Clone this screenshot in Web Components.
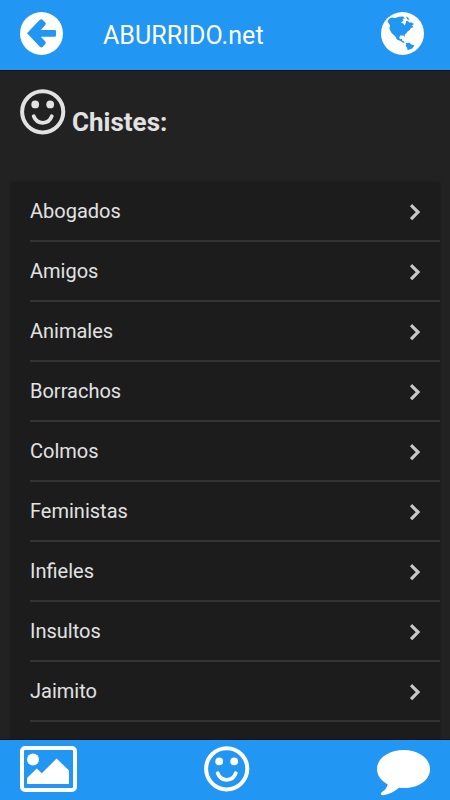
<!DOCTYPE html>
<html lang="es">
<head>
<meta charset="utf-8">
<title>ABURRIDO.net</title>
<style>
html,body{margin:0;height:100%;overflow:hidden;background:#222}
body{font-family:Roboto,"Noto Sans",sans-serif;color:#e2e2e2}
</style>
</head>
<body>
<joke-app></joke-app>
<script>
const icons = {
  back: [43,43,`<circle cx="21.5" cy="21.5" r="21.5" fill="#fff"/><path d="M7 21.3 19.6 8.1Q21.2 6.4 22.8 8L25.2 10.3Q26.6 11.7 25.1 13.3L20.8 18H34.6Q36 18 36 19.3V23.2Q36 24.7 34.6 24.7H20.8L25.1 29.3Q26.6 30.8 25.1 32.3L22.8 34.8Q21.2 36.3 19.6 34.6Z" fill="#2196f3"/>`],
  globe: [43,43,`<circle cx="21.5" cy="21.5" r="21.5" fill="#fff"/><path d="M6.5 9.5 8 6.8 10.5 5.6 14 6 18 4.8 22 4.4 24 6.2 21.5 7 22.5 8.8 19.8 10.4 21.8 11.2 23.8 13.4 24.8 10.8 25.2 8.8 27.2 9.2 28.4 10.6 30.5 10.4 33 12 31 13.6 32.4 15.2 29.8 16 28.8 18 26.8 19.2 25.4 21.2 23.8 22.6 23.8 25.2 22.5 23.4 19.5 23.4 18.2 25.2 19 27.2 21.2 26.8 20.9 28.4 22.8 29.2 23.5 31 21.6 30.4 20 29.2 15.9 27.4 14.6 24.8 10.4 20.8 8.4 16.8 9 13.3Z" fill="#2196f3"/><path d="M25 4.4 27 5.4 28.5 8 26.4 7.5Z" fill="#2196f3"/><path d="M25 31 28.5 30.8 30.5 32.4 33.4 33.6 31.2 36.4 26.5 38.2 26.2 36 24.8 34Z" fill="#2196f3"/>`],
  smile: [46,46,`<g fill="none" stroke="currentColor" stroke-width="4"><circle cx="22.7" cy="22.8" r="20.6"/><path d="M13.7 27.2C17.2 36 28.6 36 31.8 27.2" stroke-width="3.8" stroke-linecap="round"/></g><g fill="currentColor"><circle cx="15.2" cy="15.4" r="3.9"/><circle cx="30.2" cy="15.4" r="3.9"/></g>`],
  image: [57,46,`<rect x="2" y="2" width="53" height="42" rx="3" fill="none" stroke="#fff" stroke-width="4"/><circle cx="13" cy="13.5" r="6" fill="#fff"/><path d="M7 38V32L16.8 22.5 21.8 27.2 36.6 12.5 49 24.5V38Z" fill="#fff"/>`],
  talk: [54,46,`<path d="M26.7 0C41.5 0 53 8.2 53 19.2S41.5 38 26.7 38L22 37.8C17.3 42 12 44.4 6.2 45.2 3.8 45.5 3.1 43.3 5 42.1 8 40 10 37.5 10.7 34.4 4.5 31.1 0 25.6 0 19 0 8.2 11.9 0 26.7 0Z" fill="#fff"/>`],
  next: [14,18,`<path d="M3.2 3.3 9 9.1 3.2 14.9" fill="none" stroke="#c9c9c9" stroke-width="3.2" stroke-linecap="square"/>`]
};

class AppIcon extends HTMLElement {
  connectedCallback() {
    const [w,h,art] = icons[this.getAttribute('name')];
    this.attachShadow({mode:'open'}).innerHTML =
      `<style>:host{display:block;flex:none;width:${w}px;height:${h}px}svg{display:block}</style>
       <svg width="${w}" height="${h}" viewBox="0 0 ${w} ${h}" aria-hidden="true">${art}</svg>`;
  }
}
customElements.define('app-icon', AppIcon);

class AppHeader extends HTMLElement {
  connectedCallback() {
    this.attachShadow({mode:'open'}).innerHTML = `<style>
      :host{display:flex;box-sizing:border-box;height:70px;flex:none;padding:12px 26px 0 20px;align-items:flex-start;background:#2196f3;color:#fff}
      .title{flex:1;padding:9px 0 0 40px;font-size:25px;line-height:30px;font-weight:400;letter-spacing:.06px;white-space:nowrap}
    </style><app-icon name="back"></app-icon><div class="title"><slot></slot></div><app-icon name="globe"></app-icon>`;
  }
}
customElements.define('app-header', AppHeader);

class PageTitle extends HTMLElement {
  connectedCallback() {
    this.attachShadow({mode:'open'}).innerHTML = `<style>
      :host{display:flex;flex:none;box-sizing:border-box;height:111px;padding:18px 0 0 20px;border-top:1px solid #160b0d}
      h1{margin:17px 0 0 6px;font-size:26px;line-height:32px;font-weight:700}
    </style><app-icon name="smile"></app-icon><h1><slot></slot></h1>`;
  }
}
customElements.define('page-title', PageTitle);

class ListRow extends HTMLElement {
  connectedCallback() {
    this.attachShadow({mode:'open'}).innerHTML = `<style>
      :host{display:flex;box-sizing:border-box;height:60px;margin-left:20px;padding:17px 17px 0 0;justify-content:space-between;border-bottom:2px solid #333;font-size:20px;line-height:24px}
      app-icon{margin-top:4px}
    </style><span><slot></slot></span><app-icon name="next"></app-icon>`;
  }
}
customElements.define('list-row', ListRow);

class ListCard extends HTMLElement {
  connectedCallback() {
    this.attachShadow({mode:'open'}).innerHTML = `<style>
      :host{display:block;flex:1;min-height:0;margin:1px 10px 0;background:#1c1c1c;border-radius:3px 3px 0 0;box-shadow:0 0 2px #1a1a1a}
    </style><slot></slot>`;
  }
}
customElements.define('list-card', ListCard);

class AppTabs extends HTMLElement {
  connectedCallback() {
    this.attachShadow({mode:'open'}).innerHTML = `<style>
      :host{display:flex;position:relative;box-sizing:border-box;height:61px;flex:none;padding:6px 19px 0 20px;justify-content:space-between;background:#2196f3;border-top:1px solid #101010;color:#fff}
      .talk{margin-top:4px}
    </style><app-icon name="image"></app-icon><app-icon name="smile"></app-icon><app-icon class="talk" name="talk"></app-icon>`;
  }
}
customElements.define('app-tabs', AppTabs);

class JokeApp extends HTMLElement {
  connectedCallback() {
    const rows = ['Abogados','Amigos','Animales','Borrachos','Colmos','Feministas','Infieles','Insultos','Jaimito'];
    this.attachShadow({mode:'open'}).innerHTML = `<style>
      :host{display:flex;flex-direction:column;width:450px;height:800px;overflow:hidden;background:#222}
    </style><app-header>ABURRIDO.net</app-header><page-title>Chistes:</page-title>
    <list-card>${rows.map(r => `<list-row>${r}</list-row>`).join('')}</list-card><app-tabs></app-tabs>`;
  }
}
customElements.define('joke-app', JokeApp);
</script>
</body>
</html>
